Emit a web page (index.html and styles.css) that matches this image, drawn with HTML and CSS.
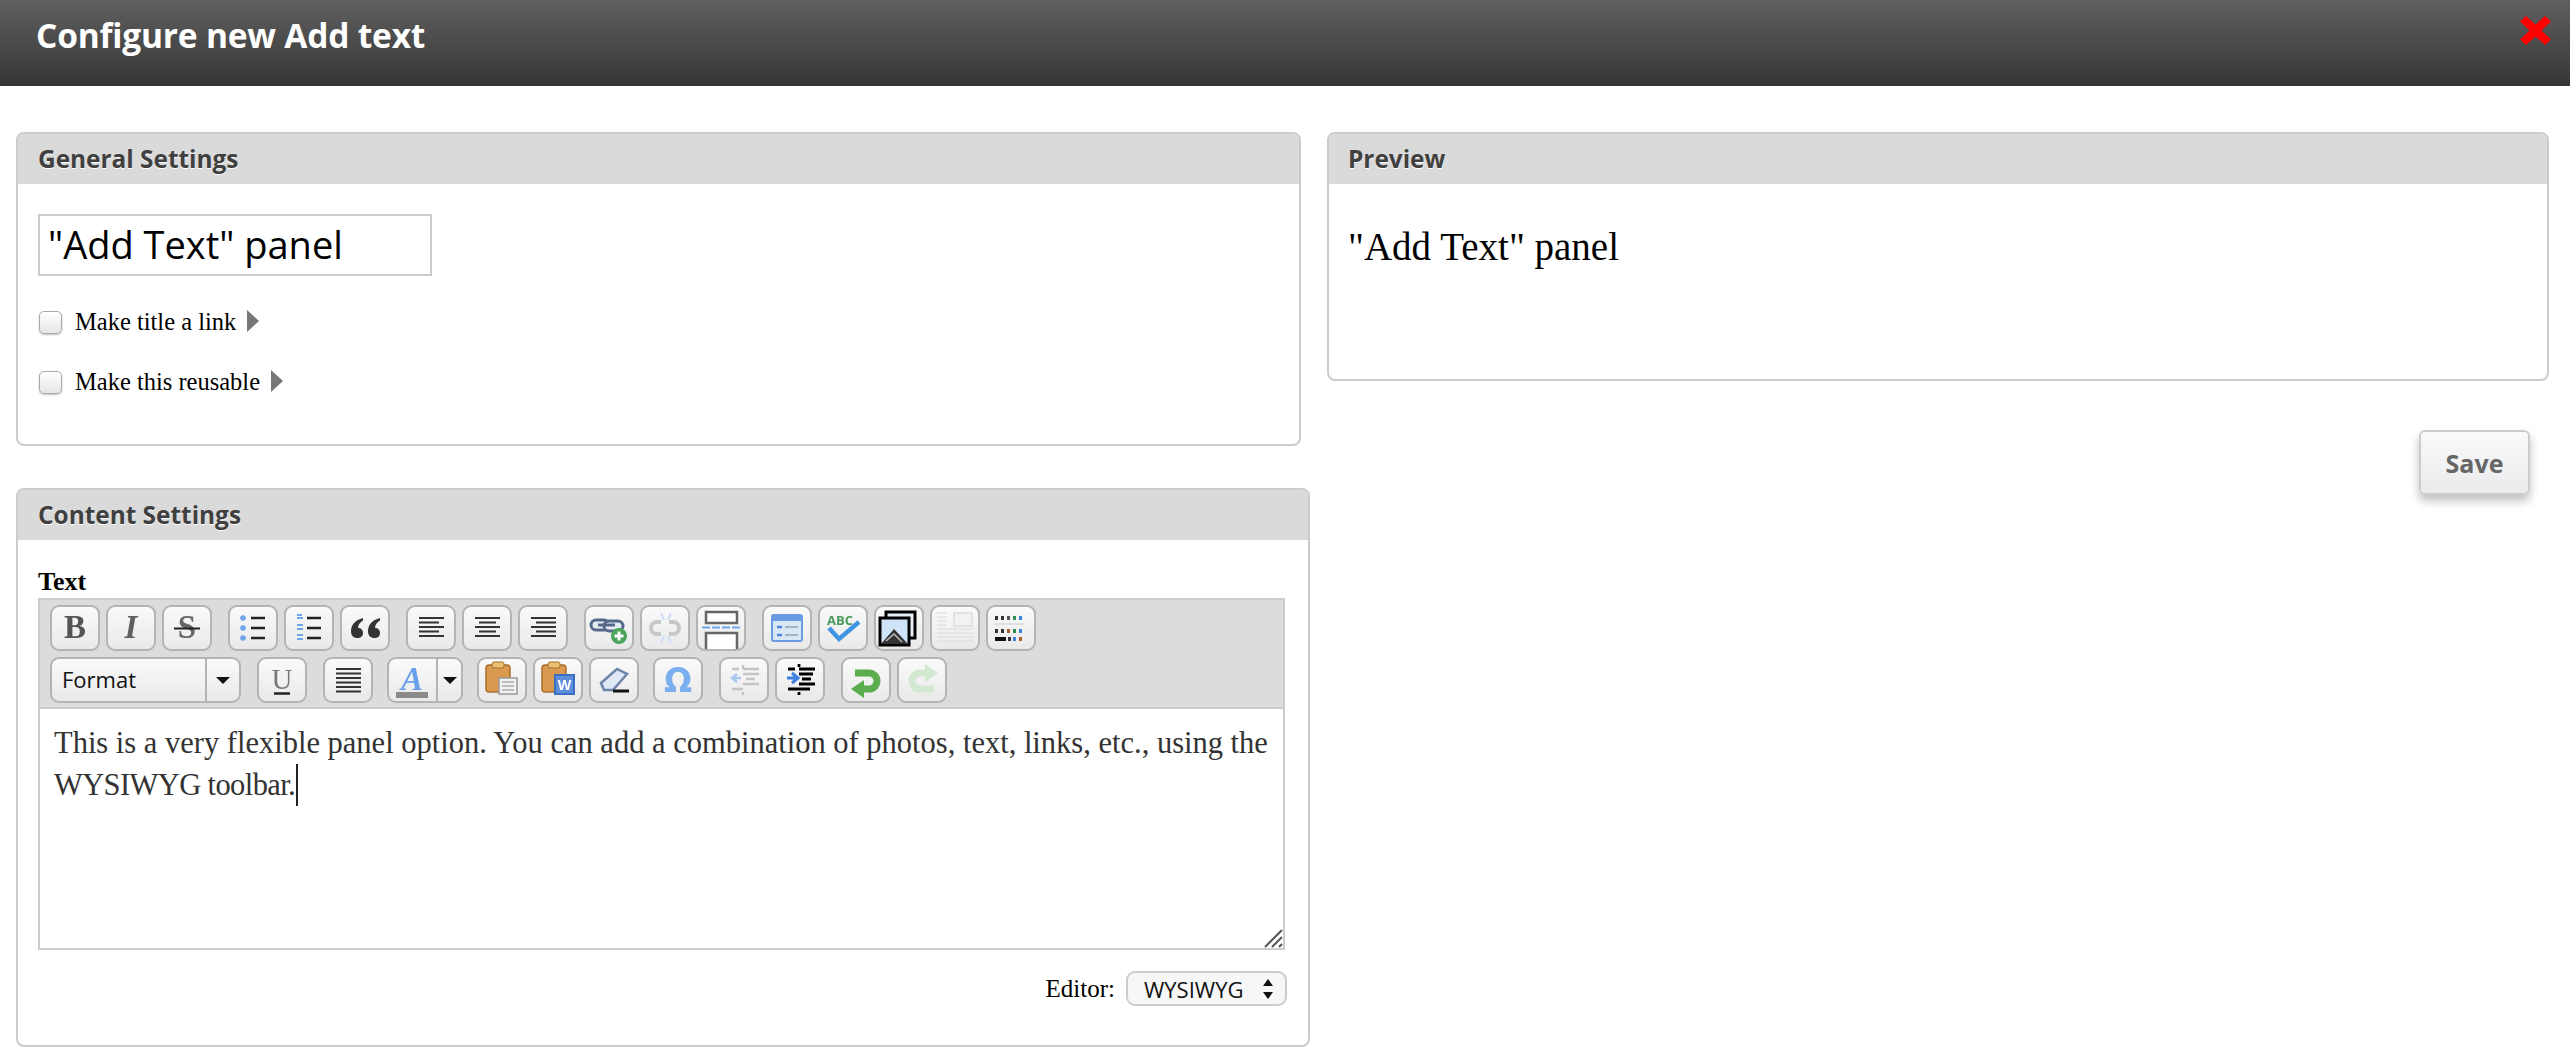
FILE: index.html
```html
<!DOCTYPE html>
<html lang="en">
<head>
<meta charset="utf-8">
<title>Configure new Add text</title>
<link rel="stylesheet" href="styles.css">
</head>
<body>
<header class="topbar">
  <h1 class="topbar-title">Configure new Add text</h1>
  <svg class="close" viewBox="0 0 31 29" width="31" height="29"><path d="M6 0 L15.500 8.500 L25 0 L31 5.500 L21.500 14.500 L31 23.500 L25 29 L15.500 20.500 L6 29 L0 23.500 L9.500 14.500 L0 5.500 Z" fill="#f00"/></svg>
</header>
<main class="layout">
  <div class="col-left">
    <section class="panel panel-general">
      <h2 class="panel-head">General Settings</h2>
      <div class="general-body">
        <input class="title-input" type="text" value="&quot;Add Text&quot; panel">
        <label class="check-row"><input class="check" type="checkbox"><span>Make title a link</span><svg class="tri" viewBox="0 0 12 22" width="12" height="22"><polygon points="0,0 12,11 0,22" fill="#777"/></svg></label>
        <label class="check-row"><input class="check" type="checkbox"><span>Make this reusable</span><svg class="tri" viewBox="0 0 12 22" width="12" height="22"><polygon points="0,0 12,11 0,22" fill="#777"/></svg></label>
      </div>
    </section>
    <section class="panel panel-content">
      <h2 class="panel-head">Content Settings</h2>
      <div class="content-body">
        <div class="field-label">Text</div>
        <div class="editor">
          <div class="toolbar">
            <div class="tb-row">
              <div class="tb-group">
                <button class="tb"><svg viewBox="0 0 50 46"><text x="25" y="33" class="g-b">B</text></svg></button>
                <button class="tb"><svg viewBox="0 0 50 46"><text x="25" y="33" class="g-i">I</text></svg></button>
                <button class="tb"><svg viewBox="0 0 50 46"><text x="25" y="33" class="g-s">S</text><path d="M12 23.500H38" stroke="#222" stroke-width="2"/></svg></button>
              </div>
              <div class="tb-group">
                <button class="tb"><svg viewBox="0 0 50 46"><g fill="#6fa5ea"><circle cx="15" cy="13" r="2.800"/><circle cx="15" cy="23" r="2.800"/><circle cx="15" cy="33" r="2.800"/></g><path d="M23 13H37M23 23H37M23 33H37" stroke="#222" stroke-width="2.500"/></svg></button>
                <button class="tb"><svg viewBox="0 0 50 46"><g fill="#6fa5ea"><rect x="13" y="9" width="5" height="2"/><rect x="13" y="12" width="6" height="2"/><rect x="13" y="19" width="6" height="2"/><rect x="13" y="23" width="6" height="2"/><rect x="13" y="29" width="6" height="2"/><rect x="13" y="33" width="6" height="2"/></g><path d="M23 13H37M23 23H37M23 33H37" stroke="#222" stroke-width="2.500"/></svg></button>
                <button class="tb"><svg viewBox="0 0 50 46"><path d="M23 13C15 15 11 20 11 26C11 31 14 33 17 33C21 33 23 31 23 28C23 25 21 23 18 23C18 20 20 17 23 15.500ZM40 13C32 15 28 20 28 26C28 31 31 33 34 33C38 33 40 31 40 28C40 25 38 23 35 23C35 20 37 17 40 15.500Z" fill="#333"/></svg></button>
              </div>
              <div class="tb-group">
                <button class="tb"><svg viewBox="0 0 50 46"><path d="M13 13H38M13 17.500H33M13 22H38M13 26.500H33M13 31H38" stroke="#333" stroke-width="2.200"/></svg></button>
                <button class="tb"><svg viewBox="0 0 50 46"><path d="M13 13H38M17 17.500H34M13 22H38M17 26.500H34M13 31H38" stroke="#333" stroke-width="2.200"/></svg></button>
                <button class="tb"><svg viewBox="0 0 50 46"><path d="M13 13H38M18 17.500H38M13 22H38M18 26.500H38M13 31H38" stroke="#333" stroke-width="2.200"/></svg></button>
              </div>
              <div class="tb-group">
                <button class="tb"><svg viewBox="0 0 50 46"><g fill="#e4eaf2" stroke="#56688a" stroke-width="3"><rect x="7" y="15" width="18" height="10" rx="5"/><rect x="20" y="16" width="19" height="10" rx="5"/></g><path d="M14 20H31" stroke="#56688a" stroke-width="3"/><circle cx="35" cy="31" r="8" fill="#4aa55a"/><path d="M35 26.500V35.500M30.500 31H39.500" stroke="#fff" stroke-width="3"/></svg></button>
                <button class="tb"><svg viewBox="0 0 50 46"><path d="M21 17H17A6 6 0 0 0 17 29H21M29 17H33A6 6 0 0 1 33 29H29" fill="none" stroke="#c8c8c8" stroke-width="4"/><path d="M21 8L24 15M31 8L28 15M21 38L24 31M31 38L28 31" stroke="#cfe0f2" stroke-width="2"/></svg></button>
                <button class="tb"><svg viewBox="0 0 50 46"><path d="M10 7H41V18H10ZM10 44V28H41V44" fill="#fff" stroke="#666" stroke-width="2.500"/><path d="M6 22.500H45" stroke="#6fa5ea" stroke-width="2" stroke-dasharray="8 2"/></svg></button>
              </div>
              <div class="tb-group">
                <button class="tb"><svg viewBox="0 0 50 46"><rect x="10" y="10" width="30" height="26" rx="2" fill="#d8e6f6" stroke="#6a9be0" stroke-width="2"/><rect x="10" y="10" width="30" height="6" fill="#6a9be0"/><path d="M15 22H20M15 30H20" stroke="#4f86d8" stroke-width="2.500"/><path d="M23 22H36M23 30H36" stroke="#8aa" stroke-width="1.500"/></svg></button>
                <button class="tb"><svg viewBox="0 0 50 46"><text x="9" y="20" class="g-abc">ABC</text><path d="M11 23L21 34L41 17" fill="none" stroke="#3f95e4" stroke-width="4.500"/></svg></button>
                <button class="tb"><svg viewBox="0 0 50 46"><rect x="12" y="7" width="29" height="26" fill="#e8eef5" stroke="#000" stroke-width="3"/><rect x="6" y="13" width="29" height="27" fill="#cfe4f8" stroke="#000" stroke-width="3"/><path d="M7 39L20 24L34 39Z" fill="#333"/><path d="M12 36L20 29L28 37" fill="none" stroke="#bbb" stroke-width="1.500"/></svg></button>
                <button class="tb"><svg viewBox="0 0 50 46"><path d="M7 8H16M7 12H16M7 16H16M7 20H16M7 24H44M7 28H44M7 32H44M7 36H44" stroke="#e2e2e2" stroke-width="1.500"/><rect x="24" y="8" width="18" height="13" fill="#f2f2f2" stroke="#ddd" stroke-width="1.500"/></svg></button>
                <button class="tb"><svg viewBox="0 0 50 46"><g><rect x="9" y="11" width="3" height="4" fill="#333"/><rect x="15" y="11" width="3" height="4" fill="#333"/><rect x="21" y="11" width="3" height="4" fill="#555"/><rect x="27" y="11" width="3" height="4" fill="#2a8f55"/><rect x="33" y="11" width="3" height="4" fill="#3c82d8"/><rect x="9" y="24" width="3" height="4" fill="#333"/><rect x="15" y="24" width="3" height="4" fill="#333"/><rect x="21" y="24" width="3" height="4" fill="#a5622a"/><rect x="27" y="24" width="3" height="4" fill="#2a8f55"/><rect x="33" y="24" width="3" height="4" fill="#3c82d8"/><rect x="9" y="32" width="11" height="4" fill="#111"/><rect x="22" y="32" width="3" height="4" fill="#333"/><rect x="27" y="32" width="3" height="4" fill="#3c82d8"/><rect x="33" y="32" width="3" height="4" fill="#a5622a"/></g><path d="M8 19H38" stroke="#ccc" stroke-width="1"/></svg></button>
              </div>
            </div>
            <div class="tb-row">
              <div class="tb-group">
                <div class="tb-combo tb-format"><span class="format-label">Format</span><span class="combo-arrow"><i class="caret-down"></i></span></div>
              </div>
              <div class="tb-group">
                <button class="tb"><svg viewBox="0 0 50 46"><text x="25" y="32" class="g-u">U</text><path d="M17 36.500H33" stroke="#222" stroke-width="2.500"/></svg></button>
              </div>
              <div class="tb-group">
                <button class="tb"><svg viewBox="0 0 50 46"><path d="M13 12H38M13 16.500H38M13 21H38M13 25.500H38M13 30H38M13 34.500H38" stroke="#333" stroke-width="2.200"/></svg></button>
              </div>
              <div class="tb-group tb-group-tight">
                <div class="tb-combo tb-color"><span class="color-face"><svg viewBox="0 0 50 46"><text x="25" y="33" class="g-a">A</text><rect x="9" y="35" width="32" height="6" fill="#8a8a8a"/></svg></span><span class="combo-arrow"><i class="caret-down"></i></span></div>
              </div>
              <div class="tb-group tb-group-tight">
                <button class="tb"><svg viewBox="0 0 50 46"><rect x="9" y="8" width="24" height="27" rx="3" fill="#d99a50" stroke="#a86f2e" stroke-width="1.500"/><rect x="15" y="5" width="12" height="6" rx="2" fill="#e8c070" stroke="#a86f2e"/><rect x="22" y="21" width="18" height="16" fill="#f2f2f2" stroke="#999" stroke-width="1.500"/><path d="M25 25H37M25 29H37M25 33H37" stroke="#aaa" stroke-width="1.500"/></svg></button>
                <button class="tb"><svg viewBox="0 0 50 46"><rect x="9" y="8" width="24" height="27" rx="3" fill="#d99a50" stroke="#a86f2e" stroke-width="1.500"/><rect x="15" y="5" width="12" height="6" rx="2" fill="#e8c070" stroke="#a86f2e"/><rect x="22" y="18" width="19" height="19" fill="#5f8fdc" stroke="#3c6fc4" stroke-width="2"/><text x="31.500" y="33" class="g-w">W</text></svg></button>
                <button class="tb"><svg viewBox="0 0 50 46"><path d="M12 26L28 12L38 17L24 33L15 33Z" fill="#dfe8f4" stroke="#6d84a8" stroke-width="2.500"/><path d="M24 34H40" stroke="#111" stroke-width="3"/></svg></button>
              </div>
              <div class="tb-group">
                <button class="tb"><svg viewBox="0 0 50 46"><text x="25" y="35" class="g-o">Ω</text></svg></button>
              </div>
              <div class="tb-group">
                <button class="tb"><svg viewBox="0 0 50 46"><path d="M24 12H40M24 17H40M27 22H36M24 27H40M13 32H24M13 12H20M24 8V12M24 35V38" stroke="#c4c4c4" stroke-width="2.500"/><path d="M22 21H14M18 17L13 21L18 25" fill="none" stroke="#a8c8f0" stroke-width="2.500"/></svg></button>
                <button class="tb"><svg viewBox="0 0 50 46"><path d="M24 12H40M24 17H38M27 22H36M24 27H40M13 32H35M13 12H20M24 7V10M24 35V38" stroke="#000" stroke-width="2.800"/><path d="M12 21H20M17 16L23 21L17 26" fill="none" stroke="#3c7fe0" stroke-width="3"/></svg></button>
              </div>
              <div class="tb-group">
                <button class="tb"><svg viewBox="0 0 50 46"><path d="M14 16H28A8 8 0 0 1 28 32H20" fill="none" stroke="#5cad4e" stroke-width="7"/><path d="M23 23L10 32L23 41Z" fill="#5cad4e"/></svg></button>
                <button class="tb"><svg viewBox="0 0 50 46"><path d="M37 32H23A8 8 0 0 1 23 16H31" fill="none" stroke="#d3e8d0" stroke-width="7"/><path d="M28 7L41 16L28 25Z" fill="#d3e8d0"/></svg></button>
              </div>
            </div>
          </div>
          <div class="edit-area">
            This is a very flexible panel option. You can add a combination of photos, text, links, etc., using the<br><span class="line-two">WYSIWYG toolbar.</span><span class="text-caret"></span>
            <svg class="resize" viewBox="0 0 20 20" width="20" height="20"><path d="M2 19L19 2M9 19L19 9M16 19L19 16" stroke="#555" stroke-width="2"/></svg>
          </div>
        </div>
        <div class="editor-switch">
          <label class="switch-label" for="ed">Editor:</label>
          <span class="select-wrap">
            <select class="switch-select" id="ed"><option>WYSIWYG</option></select>
            <svg class="select-arrows" viewBox="0 0 12 20" width="12" height="20"><path d="M6 0L11 7H1ZM6 20L1 13H11Z" fill="#111"/></svg>
          </span>
        </div>
      </div>
    </section>
  </div>
  <div class="col-right">
    <section class="panel panel-preview">
      <h2 class="panel-head">Preview</h2>
      <div class="preview-body">"Add Text" panel</div>
    </section>
    <div class="save-row"><button class="save">Save</button></div>
  </div>
</main>
</body>
</html>
```
FILE: styles.css
```css
* { box-sizing: border-box; }
html, body { margin: 0; padding: 0; height: 100%; overflow: hidden; background: #fff; }
body { font-family: "Liberation Serif", serif; color: #000; }

.topbar {
  height: 86px;
  display: flex;
  justify-content: space-between;
  align-items: flex-start;
  padding: 16px 19px 0 36px;
  background: linear-gradient(#5f5f5f, #363636);
}
.topbar-title {
  margin: 0;
  font: 700 33.500px/38px "Open Sans", sans-serif;
  color: #fff;
  letter-spacing: -0.2px;
}

.layout { display: flex; padding: 46px 0 0 16px; gap: 17px; }
.col-left { width: 1294px; flex: none; }
.col-right { width: 1222px; flex: none; }

.panel { border: 2px solid #ccc; border-radius: 8px; background: #fff; overflow: hidden; }
.panel-head {
  margin: 0;
  height: 50px;
  padding-left: 20px;
  background: #dadada;
  font: 700 24.400px/50px "Open Sans", sans-serif;
  color: #404040;
  text-shadow: 0 1px 0 #fff;
}
.panel-preview .panel-head { padding-left: 19px; }

.panel-general { width: 1285px; height: 314px; }
.general-body { padding: 30px 20px 0; display: flex; flex-direction: column; align-items: flex-start; }
.title-input {
  width: 394px;
  height: 62px;
  border: 2px solid #ccc;
  padding: 0 8px 2px;
  font: 38px "Open Sans", sans-serif;
  color: #000;
  background: #fff;
  outline: none;
}
.check-row { display: flex; align-items: center; height: 24px; margin-top: 36px; font-size: 24.500px; }
.check-row:first-of-type { margin-top: 34px; }
.check {
  appearance: none;
  width: 23px;
  height: 23px;
  margin: 1px 13px 0 1px;
  border: 1px solid #aaa;
  border-radius: 5px;
  background: linear-gradient(#fff, #e6e6e6);
  box-shadow: 0 1px 2px rgba(0,0,0,.25);
}
.tri { margin: -2px 0 0 11px; filter: blur(.6px); }

.panel-content { width: 100%; height: 559px; margin-top: 42px; }
.content-body { padding: 28px 20px 0; }
.field-label { font-size: 26px; font-weight: 700; line-height: 28px; margin-bottom: 2px; }

.editor { width: 1247px; border: 2px solid #ccc; }
.toolbar { background: #dcdcdc; padding: 5px 10px 4px; display: flex; flex-direction: column; gap: 6px; }
.tb-row { display: flex; gap: 16px; }
.tb-group { display: flex; gap: 6px; }
.tb-group-tight { margin-right: -2px; }
.tb {
  width: 50px;
  height: 46px;
  padding: 0;
  border: 2px solid #b4b4b4;
  border-radius: 9px;
  background: linear-gradient(#fafafa, #e9e9e9);
  display: block;
  position: relative;
}
.tb svg { position: absolute; left: -2px; top: -2px; width: 50px; height: 46px; filter: blur(.5px); }
.tb-combo {
  height: 46px;
  display: flex;
  border: 2px solid #b4b4b4;
  border-radius: 9px;
  background: linear-gradient(#fafafa, #e9e9e9);
}
.tb-format { width: 191px; }
.format-label { width: 155px; border-right: 2px solid #b4b4b4; padding-left: 10px; font: 22px/40px "Open Sans", sans-serif; color: #111; }
.combo-arrow { flex: 1; display: flex; align-items: center; justify-content: center; }
.caret-down { width: 0; height: 0; border: 7px solid transparent; border-top: 7px solid #111; border-bottom: 0; }
.tb-color { width: 76px; margin-left: -2px; }
.color-face { width: 49px; border-right: 2px solid #b4b4b4; position: relative; }
.color-face svg { position: absolute; left: -2px; top: -2px; width: 50px; height: 46px; filter: blur(.5px); }

.g-b, .g-i, .g-s, .g-u, .g-a { font-family: "Liberation Serif", serif; text-anchor: middle; }
.g-b { font-size: 33px; font-weight: 700; fill: #555; }
.g-i { font-size: 33px; font-weight: 700; font-style: italic; fill: #5f5f5f; }
.g-s { font-size: 33px; font-weight: 700; fill: #666; }
.g-u { font-size: 29px; fill: #777; }
.g-a { font-size: 33px; font-weight: 700; font-style: italic; fill: #6a9fea; }
.g-abc { font: 700 13px "Open Sans", sans-serif; fill: #4a9a5a; }
.g-w { font: 700 14px "Open Sans", sans-serif; fill: #fff; text-anchor: middle; }
.g-o { font: 700 33px "DejaVu Sans", sans-serif; fill: #7aaeee; text-anchor: middle; }

.edit-area {
  position: relative;
  height: 241px;
  border-top: 2px solid #ccc;
  padding: 13px 14px 0;
  background: #fff;
  font-size: 30.500px;
  line-height: 42px;
  color: #333;
  white-space: nowrap;
}
.line-two { letter-spacing: -0.6px; }
.text-caret { display: inline-block; width: 2px; height: 42px; margin-left: 1px; background: #222; vertical-align: top; }
.resize { position: absolute; right: 0; bottom: 0; }

.editor-switch { display: flex; justify-content: flex-end; align-items: center; gap: 11px; width: 1249px; margin-top: 21px; font-size: 25px; }
.select-wrap { position: relative; display: block; }
.switch-select {
  appearance: none;
  display: block;
  width: 161px;
  height: 35px;
  padding: 0 0 0 16px;
  border: 2px solid #ccc;
  border-radius: 9px;
  background: #f7f7f7;
  font: 22px "Open Sans", sans-serif;
  color: #111;
}
.select-arrows { position: absolute; right: 13px; top: 8px; }

.panel-preview { width: 100%; height: 249px; }
.preview-body { padding: 41px 19px 0; font-size: 39px; line-height: 44px; color: #000; }
.save-row { display: flex; justify-content: flex-end; margin: 49px 19px 0 0; }
.save {
  width: 111px;
  height: 65px;
  border: 2px solid #ccc;
  border-radius: 6px;
  background: linear-gradient(#f9f9f9, #eaebed);
  box-shadow: 0 6px 10px rgba(0,0,0,.25);
  font: 700 25px "Open Sans", sans-serif;
  color: #666;
  padding: 0;
}
```
